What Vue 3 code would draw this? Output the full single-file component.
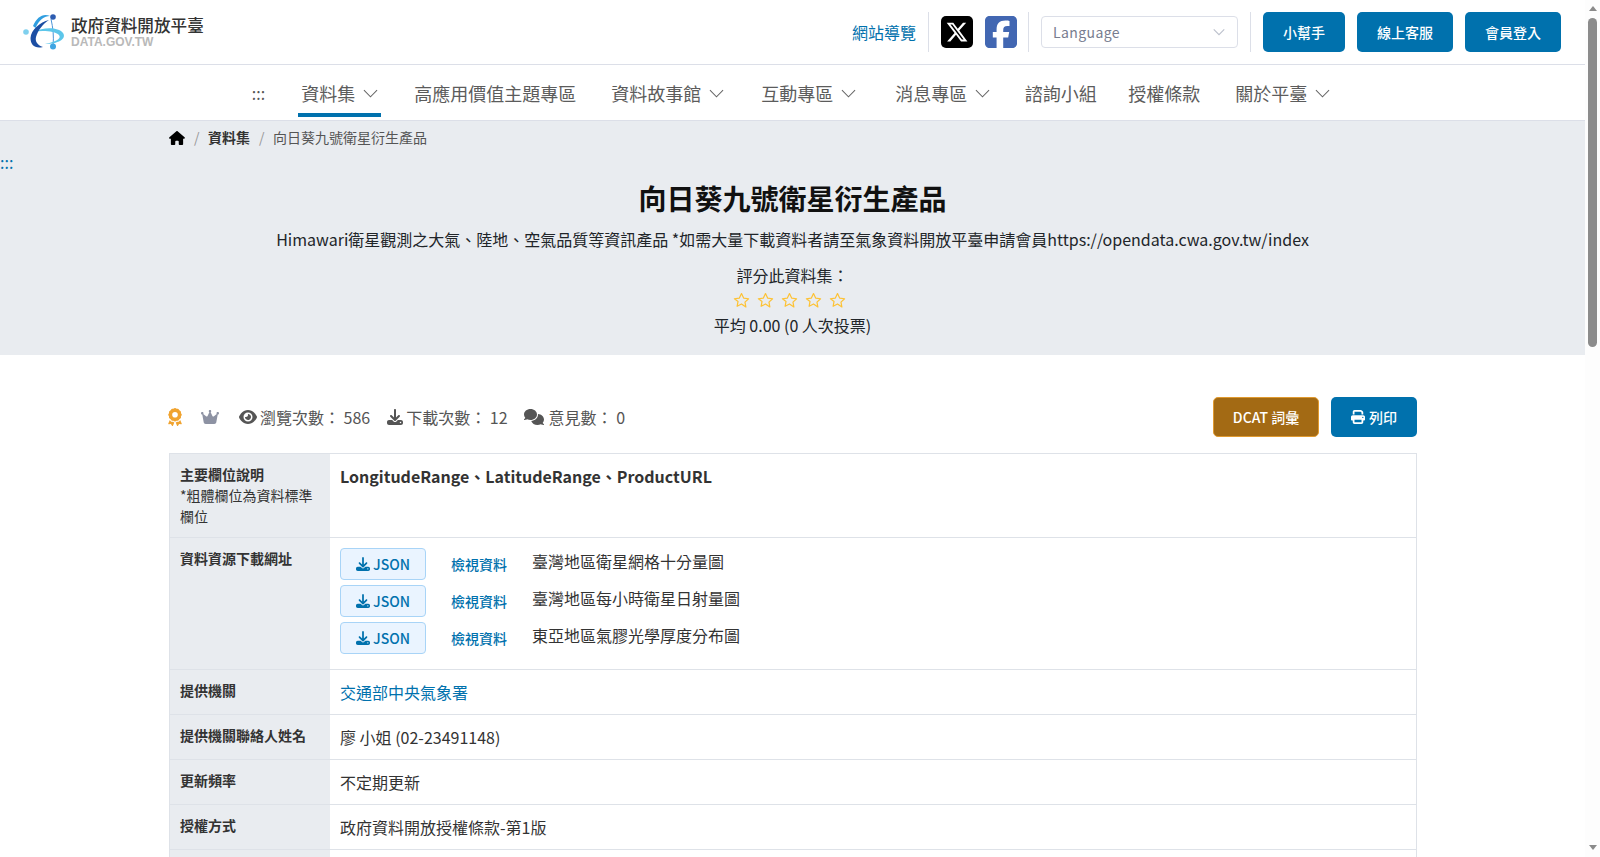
<script setup>
const navItems = [
  { label: '資料集', caret: true, active: true },
  { label: '高應用價值主題專區' },
  { label: '資料故事館', caret: true },
  { label: '互動專區', caret: true },
  { label: '消息專區', caret: true },
  { label: '諮詢小組' },
  { label: '授權條款' },
  { label: '關於平臺', caret: true },
]
const downloads = ['臺灣地區衛星網格十分量圖', '臺灣地區每小時衛星日射量圖', '東亞地區氣膠光學厚度分布圖']
const rows = [
  { label: '提供機關', value: '交通部中央氣象署', link: true },
  { label: '提供機關聯絡人姓名', value: '廖 小姐 (02-23491148)' },
  { label: '更新頻率', value: '不定期更新' },
  { label: '授權方式', value: '政府資料開放授權條款-第1版' },
  { label: '', value: '' },
]
const dl = 'M288 32c0-17.7-14.3-32-32-32s-32 14.3-32 32V274.7l-73.4-73.4c-12.5-12.5-32.8-12.5-45.3 0s-12.5 32.8 0 45.3l128 128c12.5 12.5 32.8 12.5 45.3 0l128-128c12.5-12.5 12.5-32.8 0-45.3s-32.8-12.5-45.3 0L288 274.7V32zM64 352c-35.3 0-64 28.7-64 64v32c0 35.3 28.7 64 64 64H448c35.3 0 64-28.7 64-64V416c0-35.3-28.7-64-64-64H346.5l-45.3 45.3c-25 25-65.5 25-90.5 0L165.5 352H64zm368 56a24 24 0 1 1 0 48 24 24 0 1 1 0-48z'
</script>

<template>
  <div class="shell">
    <div class="page">
      <header class="top">
        <div class="logo">
          <svg class="logo-mark" viewBox="0 0 50 48" width="50" height="48">
            <path d="M31 11C33 20 34 28 33 38" fill="none" stroke="#4a94d8" stroke-width="1" />
            <path d="M13 24C24 19 38 19 43 25C47 31 38 36 25 36C35 34 42 31 39 27C35 23 22 22 13 24Z" fill="#5cc6ea" />
            <path d="M13 18C17 9 23 5 30 8C24 8 19 12 15.5 20Z" fill="#2f9ee0" />
            <path d="M29 12C20 14 11 22 10.5 30C10.5 37 15 41 23 39C17 37 15 33 16 29C18 22 23 16 29 12Z" fill="#1c4ea3" />
            <circle cx="33" cy="9" r="2.8" fill="#2d5cb0" />
            <circle cx="33" cy="38.5" r="3" fill="#3fa5e2" />
            <circle cx="6" cy="24" r="2.8" fill="#7fd0ee" />
          </svg>
          <div class="logo-text">
            <div class="logo-zh">政府資料開放平臺</div>
            <div class="logo-en">DATA.GOV.TW</div>
          </div>
        </div>
        <div class="top-right">
          <a class="sitemap">網站導覽</a>
          <span class="vr"></span>
          <svg class="social" viewBox="0 0 32 32" width="32" height="32">
            <rect width="32" height="32" rx="5" fill="#000" />
            <g transform="translate(4.5 4.5) scale(.96)"><path fill="#fff" d="M18.244 2.25h3.308l-7.227 8.26 8.502 11.24H16.17l-5.214-6.817L4.99 21.75H1.68l7.73-8.835L1.254 2.25H8.08l4.713 6.231zm-1.161 17.52h1.833L7.084 4.126H5.117z" /></g>
          </svg>
          <svg class="social fb" viewBox="0 32 448 448" width="32" height="32">
            <path fill="#4267b2" d="M64 32C28.7 32 0 60.7 0 96V416c0 35.3 28.7 64 64 64h98.2V334.2H109.4V256h52.8V222.3c0-87.1 39.4-127.4 125-127.4c16.2 0 44.2 3.2 55.7 6.4V172c-6-.6-16.5-1-29.6-1c-42 0-58.2 15.9-58.2 57.2V256h83.6l-14.4 78.2H255V480H384c35.3 0 64-28.7 64-64V96c0-35.3-28.7-64-64-64H64z" />
          </svg>
          <span class="vr"></span>
          <div class="lang">
            <span>Language</span>
            <svg viewBox="0 0 16 16" width="14" height="14"><path d="M2 5l6 6 6-6" fill="none" stroke="#bcc1cc" stroke-width="1.3" /></svg>
          </div>
          <span class="vr"></span>
          <a class="btn-top w82">小幫手</a>
          <a class="btn-top">線上客服</a>
          <a class="btn-top">會員登入</a>
        </div>
      </header>

      <nav class="nav">
        <a class="nav-anchor">:::</a>
        <a v-for="item in navItems" :key="item.label" class="nav-item" :class="{ active: item.active, caret: item.caret }">
          {{ item.label }}
          <svg v-if="item.caret" viewBox="0 0 16 16" width="15" height="15"><path d="M1 4.5l7 7 7-7" fill="none" stroke="#666" stroke-width="1.1" /></svg>
        </a>
      </nav>

      <section class="hero">
        <div class="crumbs">
          <svg viewBox="0 0 576 512" width="16" height="14"><path d="M575.8 255.5c0 18-15 32.1-32 32.1h-32l.7 160.2c0 2.7-.2 5.4-.5 8.1V472c0 22.1-17.9 40-40 40H456c-1.1 0-2.2 0-3.3-.1c-1.4 .1-2.8 .1-4.2 .1H416 392c-22.1 0-40-17.9-40-40V448 384c0-17.7-14.3-32-32-32H256c-17.7 0-32 14.3-32 32v64 24c0 22.1-17.9 40-40 40H160 128.1c-1.5 0-3-.1-4.5-.2c-1.2 .1-2.4 .2-3.6 .2H104c-22.1 0-40-17.9-40-40V360c0-.9 0-1.9 .1-2.8V287.6H32c-18 0-32-14-32-32.1c0-9 3-17 10-24L266.4 8c7-7 15-8 22-8s15 2 21 7L564.8 231.5c8 7 12 15 11 24z" /></svg>
          <span class="sep">/</span>
          <b>資料集</b>
          <span class="sep">/</span>
          <span class="crumb-cur">向日葵九號衛星衍生產品</span>
        </div>
        <a class="hero-anchor">:::</a>
        <h1>向日葵九號衛星衍生產品</h1>
        <p class="desc">Himawari衛星觀測之大氣、陸地、空氣品質等資訊產品 *如需大量下載資料者請至氣象資料開放平臺申請會員https://opendata.cwa.gov.tw/index</p>
        <p class="rate-label">評分此資料集：</p>
        <div class="stars">
          <svg v-for="n in 5" :key="n" viewBox="0 0 24 24" width="17" height="17"><path d="M12 2.2l3 6.4 7 .9-5.1 4.8 1.3 6.9L12 16.9l-6.2 3.3 1.3-6.9L2 9.5l7-.9z" fill="none" stroke="#fdc234" stroke-width="1.7" stroke-linejoin="round" /></svg>
        </div>
        <p class="avg">平均 0.00 (0 人次投票)</p>
      </section>

      <main class="content">
        <div class="stats">
          <div class="stat-list">
            <svg class="award" viewBox="0 0 384 512" width="14" height="18"><path fill="#f0a32f" d="M173.8 5.5c11-7.3 25.4-7.3 36.4 0L228 17.2c6 3.9 13 5.8 20.1 5.4l21.3-1.3c13.2-.8 25.6 6.4 31.5 18.2l9.6 19.1c3.2 6.4 8.4 11.5 14.7 14.7L344.5 83c11.8 5.9 19 18.3 18.2 31.5l-1.3 21.3c-.4 7.1 1.5 14.2 5.4 20.1l11.8 17.8c7.3 11 7.3 25.4 0 36.4L366.8 228c-3.9 6-5.8 13-5.4 20.1l1.3 21.3c.8 13.2-6.4 25.6-18.2 31.5l-19.1 9.6c-6.4 3.2-11.5 8.4-14.7 14.7L301 344.5c-5.9 11.8-18.3 19-31.5 18.2l-21.3-1.3c-7.1-.4-14.2 1.5-20.1 5.4l-17.8 11.8c-11 7.3-25.4 7.3-36.4 0L156 366.8c-6-3.9-13-5.8-20.1-5.4l-21.3 1.3c-13.2 .8-25.6-6.4-31.5-18.2l-9.6-19.1c-3.2-6.4-8.4-11.5-14.7-14.7L39.5 301c-11.8-5.9-19-18.3-18.2-31.5l1.3-21.3c.4-7.1-1.5-14.2-5.4-20.1L5.5 210.2c-7.3-11-7.3-25.4 0-36.4L17.2 156c3.9-6 5.8-13 5.4-20.1l-1.3-21.3c-.8-13.2 6.4-25.6 18.2-31.5l19.1-9.6C65 70.2 70.2 65 73.4 58.6L83 39.5c5.9-11.8 18.3-19 31.5-18.2l21.3 1.3c7.1 .4 14.2-1.5 20.1-5.4L173.8 5.5zM272 192a80 80 0 1 0 -160 0 80 80 0 1 0 160 0zM1.3 441.8L44.4 339.3c.2 .1 .3 .2 .4 .4l9.6 19.1c11.7 23.2 36 37.3 62 35.8l21.3-1.3c.2 0 .5 0 .7 .2l17.8 11.8c5.1 3.3 10.5 5.9 16.1 7.7l-37.6 89.3c-2.3 5.5-7.4 9.2-13.3 9.7s-11.6-2.2-14.8-7.2L74.4 455.5l-56.1 8.3c-5.7 .8-11.4-1.5-15-6s-4.3-10.7-2.1-16zm248 60.4L211.7 413c5.6-1.8 11-4.3 16.1-7.7l17.8-11.8c.2-.1 .4-.2 .7-.2l21.3 1.3c26 1.5 50.3-12.6 62-35.8l9.6-19.1c.1-.2 .2-.3 .4-.4l43.2 102.5c2.2 5.3 1.4 11.4-2.1 16s-9.3 6.9-15 6l-56.1-8.3-32.2 49.2c-3.2 5-8.9 7.7-14.8 7.2s-11-4.2-13.3-9.7z" /></svg>
            <svg class="crown" viewBox="0 0 576 512" width="18" height="16"><path fill="#8d92a3" d="M309 106c11.4-7 19-19.7 19-34c0-22.1-17.9-40-40-40s-40 17.9-40 40c0 14.4 7.6 27 19 34L209.7 220.6c-9.1 18.2-32.7 23.4-48.6 10.7L72 160c5-6.7 8-15 8-24c0-22.1-17.9-40-40-40S0 113.9 0 136s17.9 40 40 40c.2 0 .5 0 .7 0L86.4 427.4c5.5 30.4 32 52.6 63 52.6H426.6c30.9 0 57.4-22.1 63-52.6L535.3 176c.2 0 .5 0 .7 0c22.1 0 40-17.9 40-40s-17.9-40-40-40s-40 17.9-40 40c0 9 3 17.3 8 24l-89.1 71.3c-15.9 12.7-39.5 7.5-48.6-10.7L309 106z" /></svg>
            <span class="stat eye">
              <svg viewBox="0 0 576 512" width="18" height="16"><path d="M288 32c-80.8 0-145.5 36.8-192.6 80.6C48.6 156 17.3 208 2.5 243.7c-3.3 7.9-3.3 16.7 0 24.6C17.3 304 48.6 356 95.4 399.4C142.5 443.2 207.2 480 288 480s145.5-36.8 192.6-80.6c46.8-43.5 78.1-95.4 93-131.1c3.3-7.9 3.3-16.7 0-24.6c-14.9-35.7-46.2-87.7-93-131.1C433.5 68.8 368.8 32 288 32zM144 256a144 144 0 1 1 288 0 144 144 0 1 1 -288 0zm144-64c0 35.3-28.7 64-64 64c-7.1 0-13.9-1.2-20.3-3.3c-5.5-1.8-11.9 1.6-11.7 7.4c.3 6.9 1.3 13.8 3.2 20.7c13.7 51.2 66.4 81.6 117.6 67.9s81.6-66.4 67.9-117.6c-11.1-41.5-47.8-69.4-88.6-71.1c-5.8-.2-9.2 6.1-7.4 11.7c2.1 6.4 3.3 13.2 3.3 20.3z" /></svg>
              <span>瀏覽次數： 586</span>
            </span>
            <span class="stat">
              <svg viewBox="0 0 512 512" width="16" height="16"><path :d="dl" /></svg>
              <span>下載次數： 12</span>
            </span>
            <span class="stat chat">
              <svg viewBox="0 0 640 512" width="20" height="16"><path d="M208 352c114.9 0 208-78.8 208-176S322.9 0 208 0S0 78.8 0 176c0 38.6 14.7 74.3 39.6 103.4c-3.5 9.4-8.7 17.7-14.2 24.7c-4.8 6.2-9.7 11-13.3 14.3c-1.8 1.6-3.3 2.9-4.3 3.7c-.5 .4-.9 .7-1.1 .8l-.2 .2 0 0 0 0C1 327.2-1.4 334.4 .8 340.9S9.1 352 16 352c21.8 0 43.8-5.6 62.1-12.5c9.2-3.5 17.8-7.4 25.3-11.4C134.1 343.3 169.8 352 208 352zM448 176c0 112.3-99.1 196.9-216.5 207C255.8 457.4 336.4 512 432 512c38.2 0 73.9-8.7 104.7-23.9c7.5 4 16 7.9 25.2 11.4c18.3 6.9 40.3 12.5 62.1 12.5c6.9 0 13.1-4.5 15.2-11.1c2.1-6.6-.2-13.8-5.8-17.9l0 0 0 0-.2-.2c-.2-.2-.6-.4-1.1-.8c-1-.8-2.5-2-4.3-3.7c-3.6-3.3-8.5-8.1-13.3-14.3c-5.5-7-10.7-15.4-14.2-24.7c24.9-29 39.6-64.7 39.6-103.4c0-92.8-84.9-168.9-192.6-175.5c.4 5.1 .6 10.3 .6 15.5z" /></svg>
              <span>意見數： 0</span>
            </span>
          </div>
          <div class="actions">
            <a class="btn-dcat">DCAT 詞彙</a>
            <a class="btn-print">
              <svg viewBox="0 0 512 512" width="14" height="14"><path fill="#fff" d="M128 0C92.7 0 64 28.7 64 64v96h64V64H354.7L384 93.3V160h64V93.3c0-17-6.7-33.3-18.7-45.3L400 18.7C388 6.7 371.7 0 354.7 0H128zM384 352v32 64H128V384 368 352H384zm64 32h32c17.7 0 32-14.3 32-32V256c0-35.3-28.7-64-64-64H64c-35.3 0-64 28.7-64 64v96c0 17.7 14.3 32 32 32H64v64c0 35.3 28.7 64 64 64H384c35.3 0 64-28.7 64-64V384zM432 248a24 24 0 1 1 0 48 24 24 0 1 1 0-48z" /></svg>
              列印
            </a>
          </div>
        </div>

        <div class="table">
          <div class="row">
            <div class="th"><b>主要欄位說明</b><br />*粗體欄位為資料標準欄位</div>
            <div class="td strong">LongitudeRange、LatitudeRange、ProductURL</div>
          </div>
          <div class="row">
            <div class="th"><b>資料資源下載網址</b></div>
            <div class="td res">
              <div v-for="d in downloads" :key="d" class="res-row">
                <a class="btn-json">
                  <svg viewBox="0 0 512 512" width="14" height="14"><path fill="#0071ad" :d="dl" /></svg>
                  JSON
                </a>
                <a class="view">檢視資料</a>
                <span class="res-name">{{ d }}</span>
              </div>
            </div>
          </div>
          <div v-for="(r, i) in rows" :key="i" class="row">
            <div class="th"><b>{{ r.label }}</b></div>
            <div class="td" :class="{ link: r.link }">{{ r.value }}</div>
          </div>
        </div>
      </main>
    </div>
    <aside class="scrollbar" aria-hidden="true">
      <span class="arrow up"></span>
      <span class="thumb"></span>
      <span class="arrow down"></span>
    </aside>
  </div>
</template>

<style>
html, body { margin: 0; background: #fff; overflow: hidden; }
</style>

<style scoped>
.shell { display: flex; height: 100vh; overflow: hidden; }
.page {
  flex: 1;
  min-width: 0;
  overflow: hidden;
  font-family: "Noto Sans CJK TC", "Noto Sans", sans-serif;
  font-size: 16px;
  color: #212529;
}
.scrollbar {
  width: 15px;
  flex: none;
  background: #fdfdfd;
  display: flex;
  flex-direction: column;
  align-items: center;
  box-sizing: border-box;
  padding: 6px 0 7px;
}
.arrow { width: 0; height: 0; border-left: 4.5px solid transparent; border-right: 4.5px solid transparent; }
.up { border-bottom: 5px solid #8a8a8a; }
.down { border-top: 5px solid #8a8a8a; margin-top: auto; }
.thumb { width: 9px; height: 329px; margin-top: 7px; background: #8c8c8c; border-radius: 5px; }

a { text-decoration: none; cursor: pointer; }
p, h1 { margin: 0; }

.top {
  height: 65px;
  box-sizing: border-box;
  border-bottom: 1px solid #dcdfe8;
  display: flex;
  align-items: center;
  justify-content: space-between;
  padding: 0 24px 0 20px;
}
.logo { display: flex; align-items: center; gap: 1px; }
.logo-mark { display: block; }
.logo-text { display: flex; flex-direction: column; margin-top: -1px; }
.logo-zh { font-size: 16.6px; line-height: 20px; font-weight: 500; color: #333; }
.logo-en { font-family: "Liberation Sans", sans-serif; font-size: 12px; line-height: 14px; font-weight: 700; color: #b9b9b9; }
.top-right { display: flex; align-items: center; gap: 12px; }
.sitemap { color: #0071ad; font-size: 16px; }
.vr { width: 1px; height: 40px; background: #dcdfe8; }
.social { display: block; }
.fb { margin-right: -1px; }
.lang {
  width: 197px;
  height: 32px;
  box-sizing: border-box;
  border: 1px solid #dcdfe8;
  border-radius: 4px;
  display: flex;
  align-items: center;
  justify-content: space-between;
  padding: 0 11px;
  color: #787d8f;
  font-size: 14px;
  letter-spacing: .4px;
}
.btn-top {
  width: 96px;
  height: 40px;
  box-sizing: border-box;
  border-radius: 5px;
  background: #0071ad;
  color: #fff;
  font-size: 14px;
  font-weight: 500;
  display: flex;
  align-items: center;
  justify-content: center;
}
.w82 { width: 82px; }

.nav {
  height: 56px;
  box-sizing: border-box;
  border-bottom: 1px solid #dcdfe8;
  display: flex;
  justify-content: center;
  gap: 27px;
  padding-left: 3px;
}
.nav-anchor { font-size: 16px; line-height: 56px; color: #555; margin-right: 6px; }
.nav-item {
  display: flex;
  align-items: center;
  gap: 8px;
  height: 52px;
  padding: 4px 4px 0;
  font-size: 18px;
  color: #5c5c5c;
  box-sizing: border-box;
}
.nav-item.caret { padding-right: 6px; }
.nav-item.active { border-bottom: 4px solid #0071ad; padding: 8px 3px 0; margin-right: 2px; }
.nav-item:nth-child(5) { margin-right: 2px; }
.nav-item:nth-child(6) { margin-right: -2.5px; }
.nav-item:nth-child(7) { margin-right: -3.5px; }

.hero {
  background: #e9ecf0;
  height: 234px;
  box-sizing: border-box;
  text-align: center;
  position: relative;
  padding-top: 59px;
}
.crumbs {
  position: absolute;
  left: 169px;
  top: 6px;
  display: flex;
  align-items: center;
  font-size: 14px;
  line-height: 21px;
  color: #555;
}
.crumbs b { color: #333; font-weight: 700; }
.sep { color: #999; margin: 0 8.5px 0 9px; }
.crumb-cur { color: #555; }
.hero-anchor { position: absolute; left: 0; top: 29px; color: #0071ad; font-size: 16px; line-height: 24px; }
h1 { font-size: 28px; line-height: 36px; font-weight: 700; color: #111; }
.desc { margin-top: 11px; line-height: 24px; }
.rate-label { margin-top: 12px; line-height: 24px; }
.stars { display: flex; justify-content: center; gap: 7px; height: 24px; align-items: center; margin-top: 1px; padding-right: 7px; }
.avg { line-height: 24px; margin-top: 1px; }

.content { padding: 42px 168px 0 169px; }
.stats { display: flex; align-items: center; justify-content: space-between; height: 40px; }
.stat-list { display: flex; align-items: center; color: #555; }
.stat { display: flex; align-items: center; gap: 3px; margin-left: 17px; fill: #555; }
.eye { margin-left: 20px; }
.chat { margin-left: 16px; gap: 5px; }
.award { margin-left: -1px; margin-right: 19px; }
.actions { display: flex; gap: 12px; }
.btn-dcat, .btn-print {
  height: 40px;
  box-sizing: border-box;
  border-radius: 5px;
  color: #fff;
  font-size: 14px;
  font-weight: 500;
  display: flex;
  align-items: center;
  justify-content: center;
  gap: 4px;
}
.btn-dcat { width: 106px; background: #a36a14; border: 1px solid #e09a30; }
.btn-print { width: 86px; background: #0071ad; }

.table { margin-top: 16px; border: 1px solid #dee2e8; border-bottom: 0; }
.row { display: flex; border-bottom: 1px solid #dee2e8; min-height: 44px; }
.th {
  width: 160px;
  flex: none;
  box-sizing: border-box;
  background: #e9ecf0;
  padding: 10px;
  font-size: 14px;
  line-height: 21px;
  color: #333;
}
.th b { font-weight: 700; }
.td { flex: 1; padding: 10px; line-height: 24px; color: #333; }
.strong { font-weight: 700; }
.link { color: #0071ad; }
.res-row { display: flex; height: 37px; align-items: flex-start; }
.btn-json {
  width: 86px;
  height: 32px;
  box-sizing: border-box;
  border: 1px solid #a8d4f7;
  border-radius: 4px;
  background: #eaf4ff;
  color: #0071ad;
  font-size: 14px;
  font-weight: 500;
  display: flex;
  align-items: center;
  justify-content: center;
  gap: 3px;
}
.view { margin-left: 25px; color: #0071ad; font-size: 14px; font-weight: 500; line-height: 32px; }
.res-name { margin-left: 25px; line-height: 26px; color: #333; }
</style>
